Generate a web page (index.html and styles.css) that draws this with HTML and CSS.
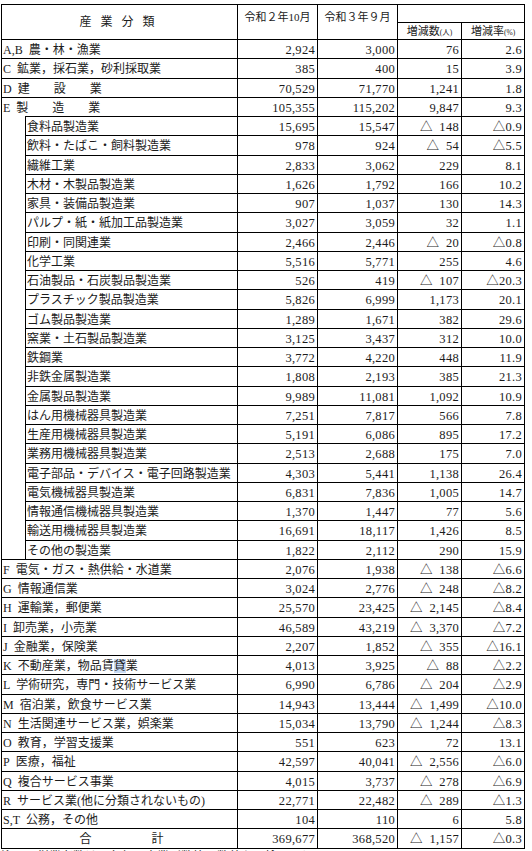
FILE: index.html
```html
<!DOCTYPE html>
<html lang="ja">
<head>
<meta charset="utf-8">
<title>産業分類別 従業者数</title>
<link rel="stylesheet" href="styles.css">
</head>
<body>
<table class="stats">
<colgroup>
<col class="c-ind"><col class="c-name"><col class="c-num"><col class="c-num"><col class="c-diff"><col class="c-rate">
</colgroup>
<thead>
<tr class="h1">
<th class="hcat" colspan="2" rowspan="2">産業分類</th>
<th class="hyear" rowspan="2">令和２年10月</th>
<th class="hyear" rowspan="2">令和３年９月</th>
<th class="hblank" colspan="2"></th>
</tr>
<tr class="h2">
<th class="hsub">増減数<span class="unit">(人)</span></th>
<th class="hsub">増減率<span class="unit">(%)</span></th>
</tr>
</thead>
<tbody>
<tr><td class="cat" colspan="2">A,B&ensp;農・林・漁業</td><td>2,924</td><td>3,000</td><td>76</td><td>2.6</td></tr>
<tr><td class="cat" colspan="2">C&ensp;鉱業，採石業，砂利採取業</td><td>385</td><td>400</td><td>15</td><td>3.9</td></tr>
<tr><td class="cat" colspan="2">D&ensp;建　　設　　業</td><td>70,529</td><td>71,770</td><td>1,241</td><td>1.8</td></tr>
<tr><td class="cat" colspan="2">E&ensp;製　　造　　業</td><td>105,355</td><td>115,202</td><td>9,847</td><td>9.3</td></tr>
<tr><td class="indent" rowspan="23"></td><td class="cat sub">食料品製造業</td><td>15,695</td><td>15,547</td><td>△&ensp;148</td><td>△0.9</td></tr>
<tr><td class="cat sub">飲料・たばこ・飼料製造業</td><td>978</td><td>924</td><td>△&ensp;54</td><td>△5.5</td></tr>
<tr><td class="cat sub">繊維工業</td><td>2,833</td><td>3,062</td><td>229</td><td>8.1</td></tr>
<tr><td class="cat sub">木材・木製品製造業</td><td>1,626</td><td>1,792</td><td>166</td><td>10.2</td></tr>
<tr><td class="cat sub">家具・装備品製造業</td><td>907</td><td>1,037</td><td>130</td><td>14.3</td></tr>
<tr><td class="cat sub">パルプ・紙・紙加工品製造業</td><td>3,027</td><td>3,059</td><td>32</td><td>1.1</td></tr>
<tr><td class="cat sub">印刷・同関連業</td><td>2,466</td><td>2,446</td><td>△&ensp;20</td><td>△0.8</td></tr>
<tr><td class="cat sub">化学工業</td><td>5,516</td><td>5,771</td><td>255</td><td>4.6</td></tr>
<tr><td class="cat sub">石油製品・石炭製品製造業</td><td>526</td><td>419</td><td>△&ensp;107</td><td>△20.3</td></tr>
<tr><td class="cat sub">プラスチック製品製造業</td><td>5,826</td><td>6,999</td><td>1,173</td><td>20.1</td></tr>
<tr><td class="cat sub">ゴム製品製造業</td><td>1,289</td><td>1,671</td><td>382</td><td>29.6</td></tr>
<tr><td class="cat sub">窯業・土石製品製造業</td><td>3,125</td><td>3,437</td><td>312</td><td>10.0</td></tr>
<tr><td class="cat sub">鉄鋼業</td><td>3,772</td><td>4,220</td><td>448</td><td>11.9</td></tr>
<tr><td class="cat sub">非鉄金属製造業</td><td>1,808</td><td>2,193</td><td>385</td><td>21.3</td></tr>
<tr><td class="cat sub">金属製品製造業</td><td>9,989</td><td>11,081</td><td>1,092</td><td>10.9</td></tr>
<tr><td class="cat sub">はん用機械器具製造業</td><td>7,251</td><td>7,817</td><td>566</td><td>7.8</td></tr>
<tr><td class="cat sub">生産用機械器具製造業</td><td>5,191</td><td>6,086</td><td>895</td><td>17.2</td></tr>
<tr><td class="cat sub">業務用機械器具製造業</td><td>2,513</td><td>2,688</td><td>175</td><td>7.0</td></tr>
<tr><td class="cat sub">電子部品・デバイス・電子回路製造業</td><td>4,303</td><td>5,441</td><td>1,138</td><td>26.4</td></tr>
<tr><td class="cat sub">電気機械器具製造業</td><td>6,831</td><td>7,836</td><td>1,005</td><td>14.7</td></tr>
<tr><td class="cat sub">情報通信機械器具製造業</td><td>1,370</td><td>1,447</td><td>77</td><td>5.6</td></tr>
<tr><td class="cat sub">輸送用機械器具製造業</td><td>16,691</td><td>18,117</td><td>1,426</td><td>8.5</td></tr>
<tr><td class="cat sub">その他の製造業</td><td>1,822</td><td>2,112</td><td>290</td><td>15.9</td></tr>
<tr><td class="cat" colspan="2">F&ensp;電気・ガス・熱供給・水道業</td><td>2,076</td><td>1,938</td><td>△&ensp;138</td><td>△6.6</td></tr>
<tr><td class="cat" colspan="2">G&ensp;情報通信業</td><td>3,024</td><td>2,776</td><td>△&ensp;248</td><td>△8.2</td></tr>
<tr><td class="cat" colspan="2">H&ensp;運輸業，郵便業</td><td>25,570</td><td>23,425</td><td>△&ensp;2,145</td><td>△8.4</td></tr>
<tr><td class="cat" colspan="2">I&ensp;卸売業，小売業</td><td>46,589</td><td>43,219</td><td>△&ensp;3,370</td><td>△7.2</td></tr>
<tr><td class="cat" colspan="2">J&ensp;金融業，保険業</td><td>2,207</td><td>1,852</td><td>△&ensp;355</td><td>△16.1</td></tr>
<tr><td class="cat" colspan="2">K&ensp;不動産業，物品賃<span class="sel">貸</span>業</td><td>4,013</td><td>3,925</td><td>△&ensp;88</td><td>△2.2</td></tr>
<tr><td class="cat" colspan="2">L&ensp;学術研究，専門・技術サービス業</td><td>6,990</td><td>6,786</td><td>△&ensp;204</td><td>△2.9</td></tr>
<tr><td class="cat" colspan="2">M&ensp;宿泊業，飲食サービス業</td><td>14,943</td><td>13,444</td><td>△&ensp;1,499</td><td>△10.0</td></tr>
<tr><td class="cat" colspan="2">N&ensp;生活関連サービス業，娯楽業</td><td>15,034</td><td>13,790</td><td>△&ensp;1,244</td><td>△8.3</td></tr>
<tr><td class="cat" colspan="2">O&ensp;教育，学習支援業</td><td>551</td><td>623</td><td>72</td><td>13.1</td></tr>
<tr><td class="cat" colspan="2">P&ensp;医療，福祉</td><td>42,597</td><td>40,041</td><td>△&ensp;2,556</td><td>△6.0</td></tr>
<tr><td class="cat" colspan="2">Q&ensp;複合サービス事業</td><td>4,015</td><td>3,737</td><td>△&ensp;278</td><td>△6.9</td></tr>
<tr><td class="cat" colspan="2">R&ensp;サービス業(他に分類されないもの)</td><td>22,771</td><td>22,482</td><td>△&ensp;289</td><td>△1.3</td></tr>
<tr><td class="cat" colspan="2">S,T&ensp;公務，その他</td><td>104</td><td>110</td><td>6</td><td>5.8</td></tr>
<tr class="total"><td class="cat totallabel" colspan="2">合　　　　　計</td><td>369,677</td><td>368,520</td><td>△&ensp;1,157</td><td>△0.3</td></tr>
</tbody>
</table>
<p class="note">注１　従業者数は、各年の事業所数等の数値を四捨五入している。</p>
</body>
</html>
```
FILE: styles.css
```css
html, body {
  margin: 0;
  background: #ffffff;
}

body {
  padding: 4px 0 0 1px;
  color: #1c1c1c;
  font-family: "Liberation Serif", "Noto Sans CJK JP", serif;
  overflow: hidden;
}

.stats {
  border-collapse: collapse;
  table-layout: fixed;
  width: 523px;
  font-size: 12px;
}

.c-ind { width: 24px; }
.c-name { width: 212px; }
.c-num { width: 80px; }
.c-diff { width: 64px; }
.c-rate { width: 63px; }

.stats th,
.stats td {
  border: 1px solid #000;
  padding: 0;
  font-weight: normal;
  white-space: nowrap;
  overflow: hidden;
}

.stats thead th {
  font-family: "Liberation Serif", "Noto Sans CJK JP", serif;
  font-size: 11px;
  line-height: 13px;
}

.h1 { height: 18px; }
.h2 { height: 16px; }

.hcat {
  text-align: center;
  vertical-align: middle;
  font-size: 12px !important;
  letter-spacing: 9px;
  text-indent: 4px;
}

.hyear {
  vertical-align: top;
  text-align: center;
  padding-top: 6px !important;
}

.hblank {
  border-bottom: 1px solid #000;
}

.hsub {
  text-align: center;
  vertical-align: middle;
  padding-top: 2px !important;
}

.unit {
  font-size: 7.5px;
}

.stats tbody tr {
  height: 19.25px;
}

.stats tbody td {
  text-align: right;
  vertical-align: middle;
  padding-right: 2px;
  padding-top: 2px;
  font-size: 12.5px;
  line-height: 14px;
  letter-spacing: 0.3px;
}

.stats tbody td.cat {
  text-align: left;
  font-size: 12px;
  letter-spacing: 0;
  padding-left: 1px;
  padding-right: 0;
}

.stats tbody td.sub {
  padding-left: 1px;
}

.stats tbody td.indent {
  border-top: hidden;
  padding: 0;
}

.stats tbody td.totallabel {
  text-align: center;
  padding-left: 4px;
}

.sel {
  background: #c8daf2;
}

.note {
  margin: 1px 0 0 0;
  font-size: 12px;
  line-height: 14px;
  white-space: nowrap;
}
```
